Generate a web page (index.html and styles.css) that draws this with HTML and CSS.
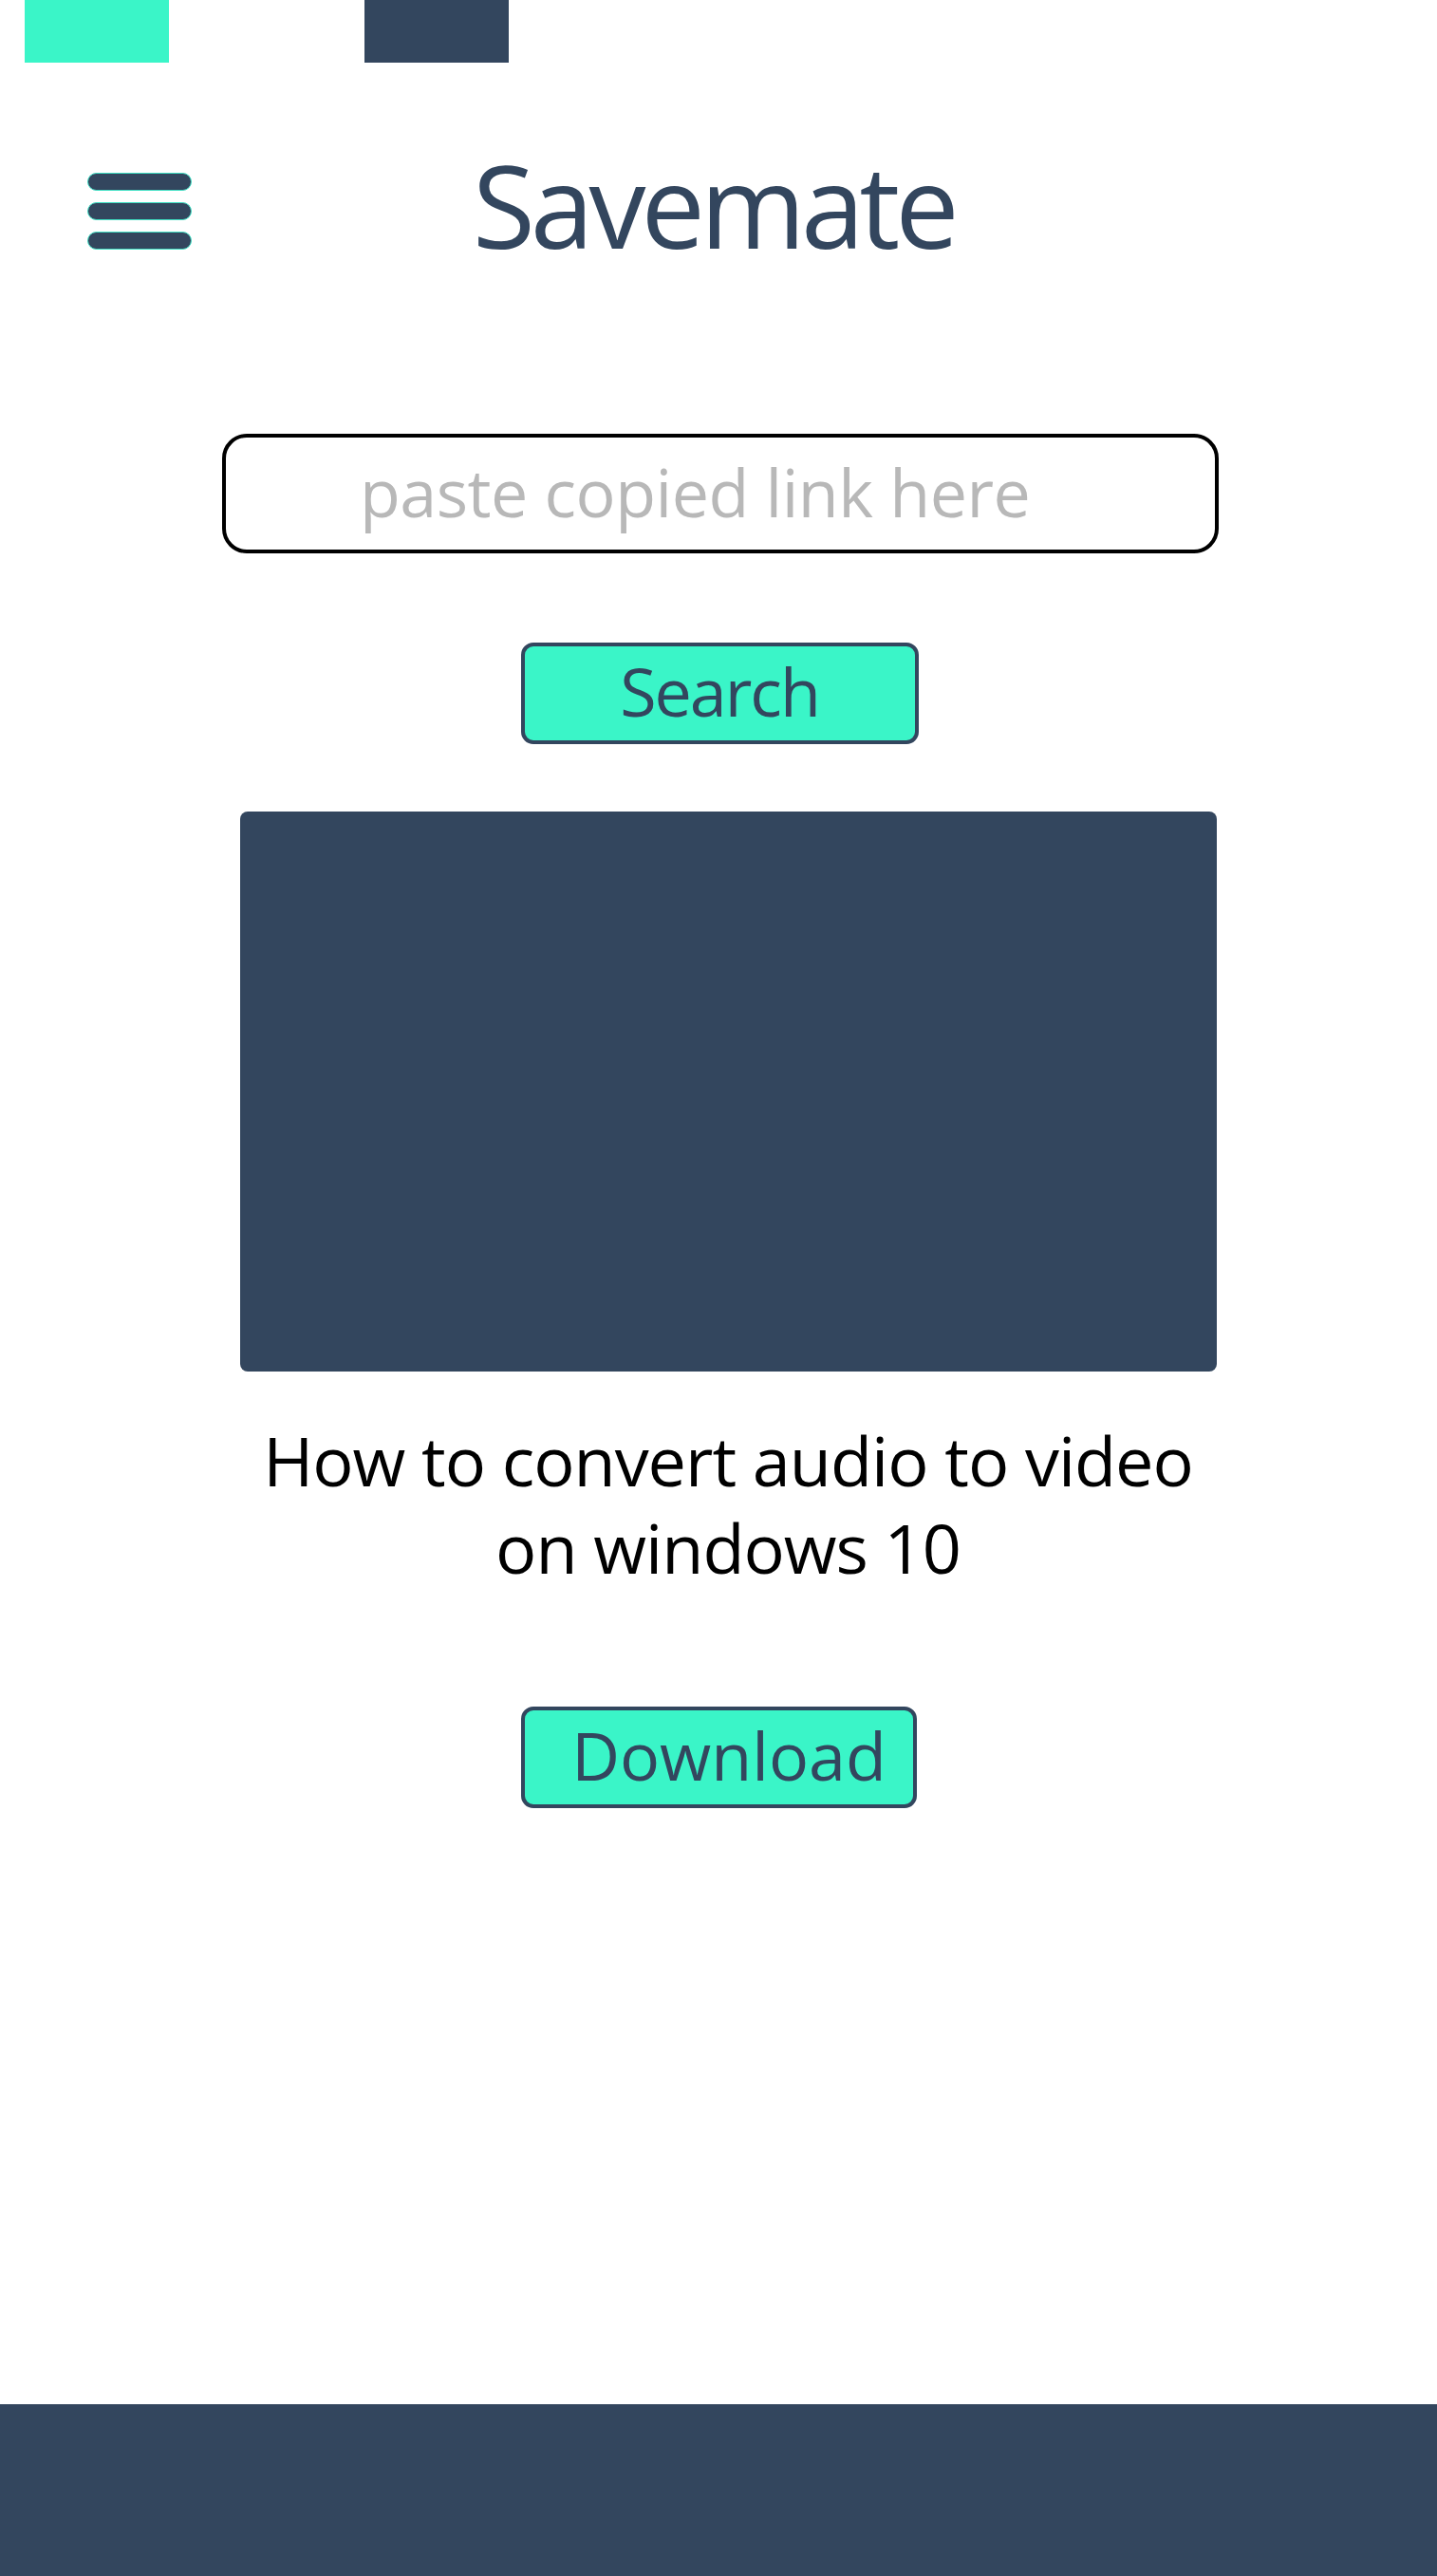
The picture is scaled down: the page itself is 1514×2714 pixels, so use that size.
FILE: index.html
```html
<!DOCTYPE html>
<html lang="en">
<head>
<meta charset="utf-8">
<title>Savemate</title>
<link rel="stylesheet" href="styles.css">
</head>
<body>
<div class="page">
  <div class="topbar">
    <span class="swatch swatch-teal"></span>
    <span class="swatch swatch-navy"></span>
  </div>
  <header class="header">
    <button class="menu" aria-label="Menu">
      <span class="bar"></span>
      <span class="bar"></span>
      <span class="bar"></span>
    </button>
    <h1 class="brand">Savemate</h1>
  </header>
  <main class="main">
    <input class="link-input" type="text" placeholder="paste copied link here">
    <button class="btn btn-search">Search</button>
    <div class="video"></div>
    <p class="video-title">How to convert audio to video<br>on windows 10</p>
    <button class="btn btn-download">Download</button>
  </main>
  <footer class="footer"></footer>
</div>
</body>
</html>
```

FILE: styles.css
```css
* { box-sizing: border-box; }

html, body {
  margin: 0;
  padding: 0;
  background: #ffffff;
}

body {
  font-family: "Open Sans", "Noto Sans", sans-serif;
  color: #33465e;
}

.page {
  min-height: 2714px;
  display: flex;
  flex-direction: column;
}

.topbar {
  display: flex;
  gap: 206px;
  padding-left: 26px;
  height: 66px;
}

.swatch {
  display: block;
  width: 152px;
  height: 66px;
}

.swatch-teal { background: #3af5c8; }
.swatch-navy { background: #33465e; }

.header {
  display: flex;
  align-items: flex-start;
  padding: 90px 0 0 92px;
}

.menu {
  display: flex;
  flex-direction: column;
  gap: 12px;
  margin-top: 26px;
  padding: 0;
  border: 0;
  background: transparent;
  width: 110px;
}

.bar {
  display: block;
  width: 110px;
  height: 19px;
  border-radius: 10px;
  background: #33465e;
  border: 1px solid #3fe0c4;
}

.brand {
  margin: 0 0 0 296px;
  font-size: 120px;
  line-height: 120px;
  font-weight: 400;
  letter-spacing: -5px;
  color: #33465e;
}

.main {
  display: flex;
  flex-direction: column;
  align-items: center;
}

.link-input {
  margin-top: 181px;
  margin-left: 4px;
  width: 1050px;
  height: 126px;
  border: 4px solid #000000;
  border-radius: 26px;
  padding: 0 0 4px 141px;
  font-family: "Open Sans", "Noto Sans", sans-serif;
  font-size: 70px;
  letter-spacing: -0.5px;
  color: #333333;
  background: #ffffff;
  outline: none;
}

.link-input::placeholder {
  color: #b8b8b8;
  opacity: 1;
}

.btn {
  display: flex;
  align-items: center;
  justify-content: center;
  height: 107px;
  background: #3af5c8;
  border: 4px solid #33465e;
  border-radius: 13px;
  font-family: "Open Sans", "Noto Sans", sans-serif;
  font-size: 70px;
  letter-spacing: -2px;
  color: #33465e;
  padding: 0 0 6px 0;
}

.btn-search {
  margin-top: 94px;
  margin-left: 2px;
  width: 419px;
}

.video {
  margin-top: 71px;
  margin-left: 21px;
  width: 1029px;
  height: 590px;
  background: #33465e;
  border-radius: 8px;
}

.video-title {
  margin: 47px 0 0 20px;
  width: 1029px;
  text-align: center;
  font-size: 72px;
  line-height: 92px;
  letter-spacing: -1px;
  color: #000000;
}

.btn-download {
  margin-top: 122px;
  width: 417px;
  padding-left: 22px;
  letter-spacing: 0;
}

.footer {
  margin-top: auto;
  height: 181px;
  background: #33465e;
}
```
